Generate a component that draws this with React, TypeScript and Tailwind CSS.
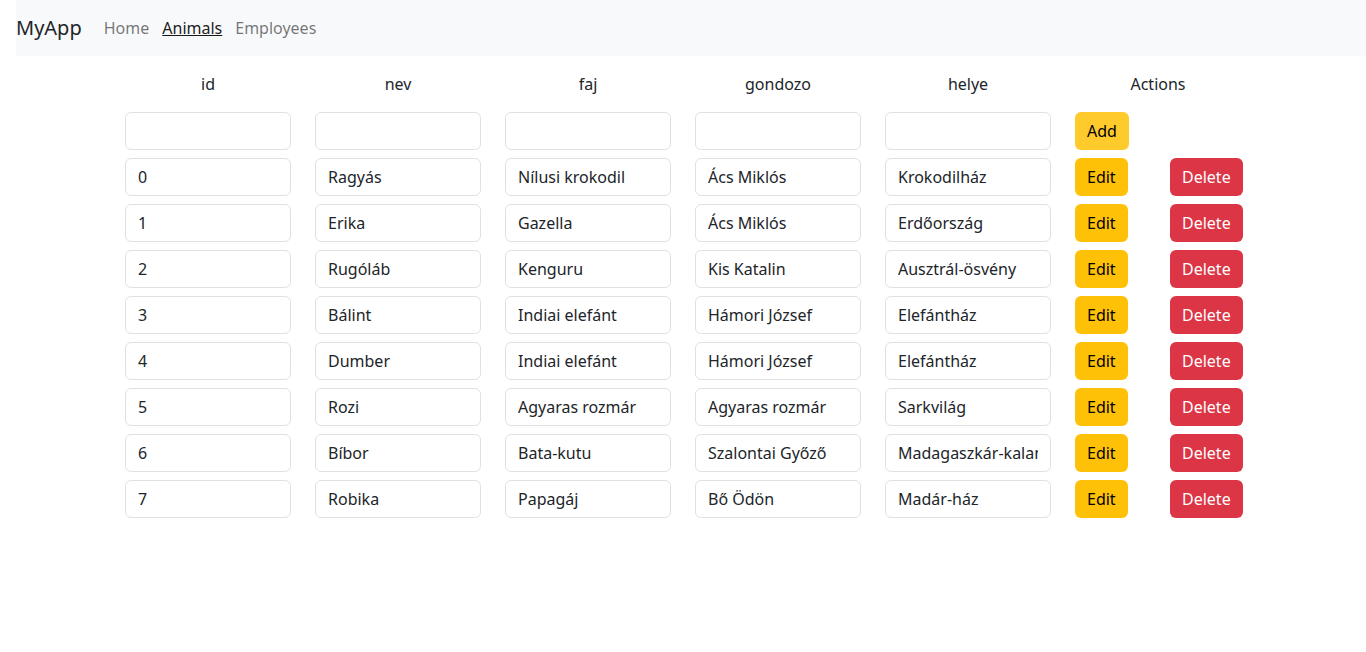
const rows = [
  ['0', 'Ragyás', 'Nílusi krokodil', 'Ács Miklós', 'Krokodilház'],
  ['1', 'Erika', 'Gazella', 'Ács Miklós', 'Erdőország'],
  ['2', 'Rugóláb', 'Kenguru', 'Kis Katalin', 'Ausztrál-ösvény'],
  ['3', 'Bálint', 'Indiai elefánt', 'Hámori József', 'Elefántház'],
  ['4', 'Dumber', 'Indiai elefánt', 'Hámori József', 'Elefántház'],
  ['5', 'Rozi', 'Agyaras rozmár', 'Agyaras rozmár', 'Sarkvilág'],
  ['6', 'Bíbor', 'Bata-kutu', 'Szalontai Győző', 'Madagaszkár-kaland'],
  ['7', 'Robika', 'Papagáj', 'Bő Ödön', 'Madár-ház'],
];

const headers = ['id', 'nev', 'faj', 'gondozo', 'helye'];

const inputCls =
  'w-[166px] h-[38px] rounded-[6px] border border-[#dee2e6] bg-white px-3 text-base text-[#212529] outline-none';

function Field({ value }: { value: string }) {
  return <input className={inputCls} defaultValue={value} />;
}

export default function App() {
  return (
    <div className="min-h-screen bg-white text-[#212529]" style={{ fontFamily: '"Noto Sans", sans-serif' }}>
      <nav className="ml-4 flex h-14 items-center bg-[#f8f9fa]">
        <span className="mr-[22px] text-xl">MyApp</span>
        <div className="flex gap-[13px] text-base">
          <a className="text-black/55">Home</a>
          <a className="text-black/90 underline">Animals</a>
          <a className="text-black/55">Employees</a>
        </div>
      </nav>

      <div className="mx-auto w-[1140px]">
        <div className="grid grid-cols-[repeat(5,190px)_190px] pt-1">
          {headers.map(h => (
            <div key={h} className="flex h-[48px] items-center justify-center text-base">
              {h}
            </div>
          ))}
          <div className="flex h-[48px] items-center justify-center text-base">Actions</div>
        </div>

        <div className="grid grid-cols-[repeat(5,190px)_95px_95px]">
          {headers.map(h => (
            <div key={h} className="px-3 py-1">
              <Field value="" />
            </div>
          ))}
          <div className="px-3 py-1">
            <button className="h-[38px] rounded-[6px] bg-[#ffca2c] px-3 text-base text-black">Add</button>
          </div>
          <div />
          {rows.map(r => (
            <div key={r[0]} className="contents">
              {r.map((v, i) => (
                <div key={i} className="px-3 py-1">
                  <Field value={v} />
                </div>
              ))}
              <div className="px-3 py-1">
                <button className="h-[38px] rounded-[6px] bg-[#ffc107] px-3 text-base text-black">Edit</button>
              </div>
              <div className="px-3 py-1">
                <button className="h-[38px] rounded-[6px] bg-[#dc3545] px-3 text-base text-white">Delete</button>
              </div>
            </div>
          ))}
        </div>
      </div>
    </div>
  );
}
